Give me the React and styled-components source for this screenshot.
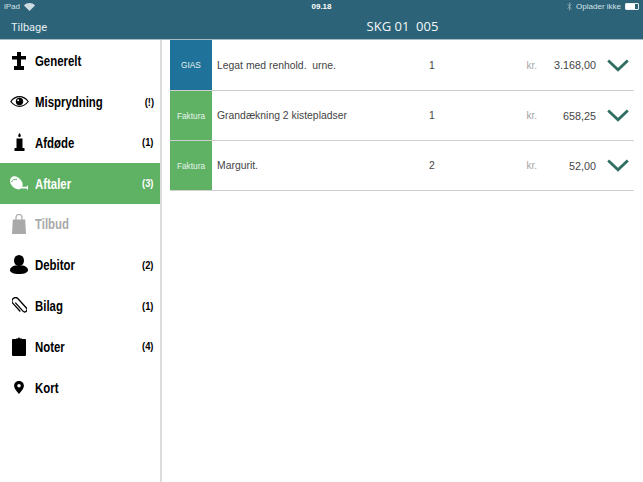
import styled, { createGlobalStyle } from "styled-components";

const GlobalStyle = createGlobalStyle`
    html, body {
        margin: 0;
        padding: 0;
        background: #fff;
        font-family: "Liberation Sans", Arial, sans-serif;
    }
`;

const CrossIcon = () => (
    <svg width="14" height="18" viewBox="0 0 14 18">
        <path d="M5 0h4v4h5v3.500H9V14h3v4H2v-4h3V7.500H0V4h5z" fill="#000" />
    </svg>
);

const EyeIcon = () => (
    <svg width="19" height="11" viewBox="0 0 19 11">
        <path d="M.8 5.500C3.500 2 6.500.7 9.500.7s6 1.300 8.700 4.800c-2.700 3.500-5.700 4.800-8.700 4.800S3.500 9 .8 5.500z" fill="none" stroke="#000" strokeWidth="1.200" />
        <circle cx="9.500" cy="5.500" r="3.700" fill="#000" />
        <circle cx="8.200" cy="4.200" r="1" fill="#fff" />
    </svg>
);

const CandleIcon = () => (
    <svg width="11" height="18" viewBox="0 0 11 18">
        <path d="M5.500 0c.8 1 1.300 2 1.300 2.800S6.300 4 5.500 4 4.200 3.600 4.200 2.800 4.700 1 5.500 0z" fill="#000" />
        <path d="M2.500 5.500h6V15h-6z" fill="#000" />
        <path d="M.5 15h10v3H.5z" fill="#000" />
    </svg>
);

const CanIcon = ({ color, cut }) => (
    <svg width="19" height="15" viewBox="0 0 19 15">
        <path d="M3.500.3C6.500 0 9.500 2 11.500 5c1.200 1.800 1.300 3.500 1 5-.8 2.500-3 3.700-5 3.300C3.500 12.500.3 8.500 0 5.500-.2 3 1.300.6 3.500.3z" fill={color} />
        <path d="M1.500 6C2.500 3.800 4.500 2.800 7 3.500" fill="none" stroke={cut} strokeWidth="1" />
        <path d="M11 10.800h5.500L18 9v5l-1.500-1.500H11z" fill={color} />
    </svg>
);

const BagIcon = ({ color }) => (
    <svg width="14" height="20" viewBox="0 0 14 20">
        <path d="M.8 5.500h12.400L14 20H0z" fill={color} />
        <path d="M4 8V3.500a3 3 0 0 1 6 0V8" fill="none" stroke={color} strokeWidth="1.200" />
    </svg>
);

const PersonIcon = () => (
    <svg width="18" height="19" viewBox="0 0 18 19">
        <ellipse cx="9" cy="5.500" rx="5" ry="5.500" fill="#000" />
        <path d="M0 15c0-2.500 3.500-4.500 6-4.500h6c2.500 0 6 2 6 4.500s-3.500 4-9 4-9-1.500-9-4z" fill="#000" />
    </svg>
);

const ClipIcon = () => (
    <svg width="15" height="17" viewBox="-7.500 -8.500 15 17">
        <path d="M-1.200-5V6.500a2.300 2.300 0 0 0 4.600 0V-6a3.400 3.400 0 0 0-6.800 0V5" fill="none" stroke="#000" strokeWidth="1.300" transform="rotate(-42)" />
    </svg>
);

const ClipboardIcon = () => (
    <svg width="14" height="19" viewBox="0 0 14 19">
        <path d="M1 2h3V1.500h2L7 0l1 1.500h2V2h3q1 0 1 1v15q0 1-1 1H1q-1 0-1-1V3q0-1 1-1z" fill="#000" />
    </svg>
);

const PinIcon = () => (
    <svg width="10" height="13" viewBox="0 0 12 16">
        <path fillRule="evenodd" d="M6 0c3.300 0 6 2.500 6 5.800C12 9.500 8 13.500 6 16 4 13.500 0 9.500 0 5.800 0 2.500 2.700 0 6 0zm0 3.700a2.200 2.200 0 1 0 0 4.400 2.200 2.200 0 0 0 0-4.400z" fill="#000" />
    </svg>
);

const WifiIcon = () => (
    <svg width="11" height="8" viewBox="0 0 11 8">
        <path d="M5.500 8 0 2.500C3-.7 8-.7 11 2.500z" fill="#cfdde3" />
    </svg>
);

const BluetoothIcon = () => (
    <svg width="5" height="9" viewBox="0 0 5 9">
        <path d="M.5 2.300 4.200 6.300 2.400 8.200V.8l1.800 1.900L.5 6.700" fill="none" stroke="#9fb7c2" strokeWidth=".7" />
    </svg>
);

const Chevron = () => (
    <svg width="22" height="13" viewBox="0 0 22 13">
        <path d="M1.200 1.500 11 10.800 20.800 1.500" fill="none" stroke="#2f6e60" strokeWidth="2.800" />
    </svg>
);

const MENU = [
    { label: "Generelt", icon: <CrossIcon /> },
    { label: "Misprydning", icon: <EyeIcon />, count: "(!)" },
    { label: "Afdøde", icon: <CandleIcon />, count: "(1)" },
    { label: "Aftaler", icon: <CanIcon color="#fff" cut="#5fb264" />, count: "(3)", active: true },
    { label: "Tilbud", icon: <BagIcon color="#a9a9a9" />, disabled: true },
    { label: "Debitor", icon: <PersonIcon />, count: "(2)" },
    { label: "Bilag", icon: <ClipIcon />, count: "(1)" },
    { label: "Noter", icon: <ClipboardIcon />, count: "(4)" },
    { label: "Kort", icon: <PinIcon /> },
];

const ROWS = [
    { type: "GIAS", color: "#1f7299", title: "Legat med renhold.  urne.", qty: "1", amount: "3.168,00" },
    { type: "Faktura", color: "#5fb264", title: "Grandækning 2 kistepladser", qty: "1", amount: "658,25" },
    { type: "Faktura", color: "#5fb264", title: "Margurit.", qty: "2", amount: "52,00" },
];

const App = () => {
    return (
        <>
            <GlobalStyle />
            <Page>
                <Header>
                    <StatusBar>
                        <StatusSide>iPad <WifiIcon /></StatusSide>
                        <Clock>09.18</Clock>
                        <StatusSide $right>
                            <BluetoothIcon /> Oplader ikke
                            <Battery><BatteryFill /></Battery>
                        </StatusSide>
                    </StatusBar>
                    <NavBar>
                        <BackLabel>Tilbage</BackLabel>
                        <Title>SKG 01  005</Title>
                    </NavBar>
                </Header>
                <Body>
                    <Sidebar>
                        {MENU.map((item) => (
                            <MenuItem key={item.label} $active={item.active} $disabled={item.disabled}>
                                <MenuIcon>{item.icon}</MenuIcon>
                                <MenuLabel>{item.label}</MenuLabel>
                                {item.count && <MenuCount>{item.count}</MenuCount>}
                            </MenuItem>
                        ))}
                    </Sidebar>
                    <Main>
                        {ROWS.map((row) => (
                            <Row key={row.title}>
                                <TypeBadge $color={row.color}>{row.type}</TypeBadge>
                                <RowTitle>{row.title}</RowTitle>
                                <Qty>{row.qty}</Qty>
                                <Currency>kr.</Currency>
                                <Amount>{row.amount}</Amount>
                                <ChevronCell><Chevron /></ChevronCell>
                            </Row>
                        ))}
                    </Main>
                </Body>
            </Page>
        </>
    );
};

export default App;

const Page = styled.div`
    width: 643px;
    height: 482px;
    display: flex;
    flex-direction: column;
    overflow: hidden;
`;

const Header = styled.header`
    height: 40px;
    flex-shrink: 0;
    background-color: #2c6378;
    border-bottom: 1px solid #a9bcc4;
    box-sizing: border-box;
    color: #fff;
`;

const StatusBar = styled.div`
    height: 13px;
    padding: 0 4px;
    display: grid;
    grid-template-columns: 1fr auto 1fr;
    align-items: center;
    font-size: 8px;
    color: #d5e1e6;
`;

const StatusSide = styled.div`
    display: flex;
    align-items: center;
    gap: 4px;
    justify-content: ${(p) => (p.$right ? "flex-end" : "flex-start")};
`;

const Clock = styled.div`
    font-size: 8px;
    font-weight: bold;
    color: #fff;
`;

const Battery = styled.div`
    width: 12px;
    height: 5px;
    border: 1px solid #e6eef1;
    border-radius: 1px;
    display: flex;
`;

const BatteryFill = styled.div`
    width: 9px;
    background-color: #fff;
`;

const NavBar = styled.div`
    height: 26px;
    display: grid;
    grid-template-columns: 162px 1fr;
    align-items: center;
    padding-bottom: 1px;
    box-sizing: border-box;
`;

const BackLabel = styled.div`
    padding: 3px 0 0 11px;
    font-size: 11px;
    font-family: Roboto, sans-serif;
    color: #e6eef1;
`;

const Title = styled.div`
    font-family: "Open Sans", sans-serif;
    font-size: 13px;
    text-align: center;
    white-space: pre;
    color: #f4f8f9;
`;

const Body = styled.div`
    flex: 1;
    display: flex;
    min-height: 0;
`;

const Sidebar = styled.nav`
    width: 162px;
    flex-shrink: 0;
    box-sizing: border-box;
    padding-top: 0.400px;
    border-right: 2px solid #dcdcdc;
`;

const MenuItem = styled.div`
    height: 40.800px;
    display: flex;
    align-items: center;
    box-sizing: border-box;
    padding-right: 6.500px;
    background-color: ${(p) => (p.$active ? "#5fb264" : "transparent")};
    color: ${(p) => (p.$active ? "#fff" : p.$disabled ? "#a9a9a9" : "#000")};
`;

const MenuIcon = styled.div`
    width: 35px;
    flex-shrink: 0;
    display: flex;
    justify-content: center;
    padding-left: 3px;
    box-sizing: border-box;
    & > svg { display: block; }
`;

/* no condensed family is installed, so the bold face is squeezed */
const MenuLabel = styled.div`
    flex: 1;
    font-weight: bold;
    font-size: 15px;
    transform: scaleX(0.76);
    transform-origin: left center;
    white-space: nowrap;
`;

const MenuCount = styled.div`
    font-weight: bold;
    font-size: 11px;
    transform: scaleX(0.85);
    transform-origin: right center;
`;

const Main = styled.main`
    flex: 1;
    padding: 0 9px 0 8px;
    min-width: 0;
`;

const Row = styled.div`
    height: 50px;
    box-sizing: border-box;
    display: grid;
    grid-template-columns: 42px 205px 30px 1fr 59px 38px;
    align-items: center;
    border-bottom: 1px solid #cfcfcf;
    font-size: 10.400px;
    color: #444;

    &:first-child {
        height: 51px;
    }
`;

const TypeBadge = styled.div`
    align-self: stretch;
    display: flex;
    align-items: center;
    justify-content: center;
    font-size: 8.300px;
    color: #e8f2ee;
    background-color: ${(p) => p.$color};
`;

const RowTitle = styled.div`
    padding-left: 5px;
    white-space: pre;
`;

const Qty = styled.div`
    text-align: center;
`;

const Currency = styled.div`
    text-align: right;
    color: #a6a6a6;
    font-size: 10px;
`;

const Amount = styled.div`
    text-align: right;
    font-size: 10.800px;
`;

const ChevronCell = styled.div`
    display: flex;
    justify-content: flex-end;
    padding-right: 5px;
    & > svg { display: block; }
`;
